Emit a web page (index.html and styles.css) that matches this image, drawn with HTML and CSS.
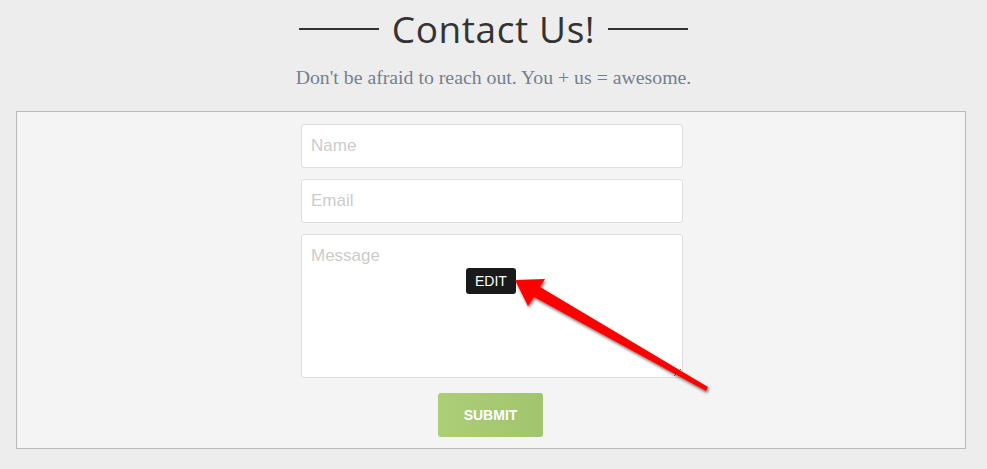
FILE: index.html
```html
<!DOCTYPE html>
<html lang="en">
<head>
  <meta charset="UTF-8" />
  <meta name="viewport" content="width=device-width, initial-scale=1.0"/>
  <title>Contact Us</title>
  <link rel="stylesheet" href="styles.css">
</head>
<body>
  <!-- Heading -->
  <div class="heading">
    <h1>Contact Us!</h1>
    <p>Don't be afraid to reach out. You + us = awesome.</p>
  </div>

  <!-- Contact form -->
  <div class="form-box">
    <form class="contact-form">
      <input type="text" placeholder="Name" />
      <input type="text" placeholder="Email" />
      <div class="message-wrap">
        <textarea placeholder="Message"></textarea>
        <span class="edit-tag">EDIT</span>
      </div>
      <button type="button" class="btn-submit">SUBMIT</button>
    </form>

    <!-- Annotation arrow -->
    <svg class="arrow" width="987" height="469" viewBox="0 0 987 469">
      <defs>
        <filter id="shadow" x="-10%" y="-10%" width="130%" height="130%">
          <feDropShadow dx="1" dy="2" stdDeviation="1.5" flood-color="#000" flood-opacity="0.55"/>
        </filter>
      </defs>
      <polygon points="515,280 545,279 540,287 708,387 706,391 534,297 528,306" fill="#ff0000" filter="url(#shadow)"/>
    </svg>
  </div>
</body>
</html>
```

FILE: styles.css
```css
* {
  margin: 0;
  padding: 0;
  box-sizing: border-box;
}
body {
  background: #ededed;
  font-family: "Liberation Sans", Arial, sans-serif;
  width: 987px;
  height: 469px;
  overflow: hidden;
}
.heading {
  text-align: center;
  padding-top: 8px;
}
.heading h1 {
  display: flex;
  align-items: center;
  justify-content: center;
  gap: 13px;
  font-family: "Open Sans", sans-serif;
  font-weight: 400;
  font-size: 37px;
  letter-spacing: 0.6px;
  line-height: 42px;
  color: #333;
}
.heading h1::before,
.heading h1::after {
  content: "";
  width: 80px;
  height: 2px;
  background: #333;
}
.heading p {
  margin-top: 15px;
  font-family: "Liberation Serif", serif;
  font-size: 19.8px;
  line-height: 24px;
  color: #757f8c;
}
.form-box {
  position: relative;
  width: 950px;
  margin: 22px 0 0 16px;
  padding: 12px 0 11px 2px;
  background: #f4f4f4;
  border: 1px solid #bbb;
}
.contact-form {
  width: 382px;
  margin: 0 auto;
  display: flex;
  flex-direction: column;
  align-items: center;
  gap: 11px;
}
.contact-form input,
.contact-form textarea {
  width: 382px;
  height: 44px;
  padding: 0 9px;
  background: #fff;
  border: 1px solid #ddd;
  border-radius: 3px;
  font-family: "Liberation Sans", Arial, sans-serif;
  font-size: 17px;
  color: #333;
  outline: none;
}
.contact-form input::placeholder,
.contact-form textarea::placeholder {
  color: #ccc;
}
.message-wrap {
  position: relative;
}
.contact-form textarea {
  display: block;
  height: 144px;
  padding: 11px 9px;
}
.edit-tag {
  position: absolute;
  left: 165px;
  top: 34px;
  padding: 4px 9px;
  background: #1a1a1a;
  border-radius: 3px;
  color: #fff;
  font-size: 14px;
  line-height: 18px;
}
.btn-submit {
  margin: 4px 3px 0 0;
  width: 105px;
  height: 44px;
  background: linear-gradient(90deg, #abce76, #a1c56e);
  border: none;
  border-radius: 3px;
  color: #fff;
  font-family: "Liberation Sans", Arial, sans-serif;
  font-weight: bold;
  font-size: 14px;
}
.arrow {
  position: absolute;
  left: -17px;
  top: -112px;
  pointer-events: none;
}
```
